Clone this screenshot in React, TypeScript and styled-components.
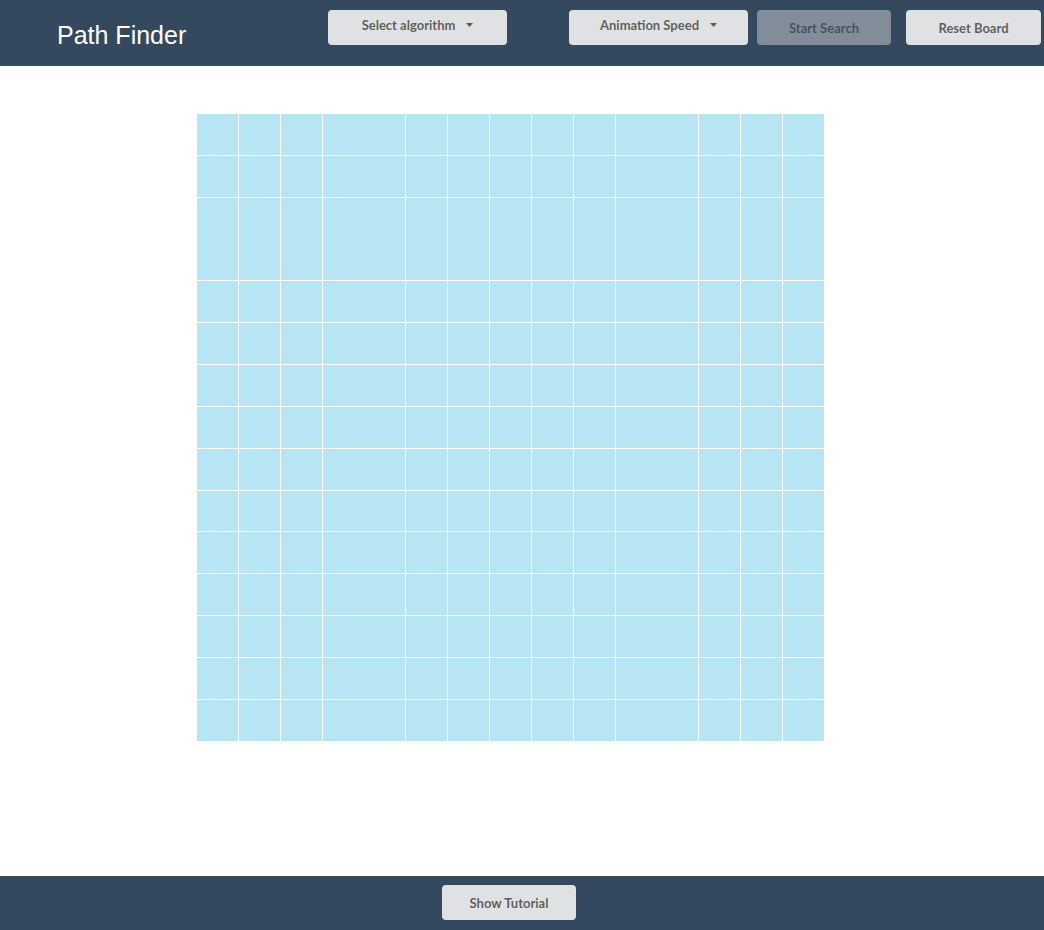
import React from 'react';
import styled, { createGlobalStyle } from 'styled-components';

// column / row sizes of the board, two wide columns and one tall row
const COLUMNS = [41, 41, 41, 82, 41, 41, 41, 41, 41, 82, 41, 41, 41];
const ROWS = [41, 41, 82, 41, 41, 41, 41, 41, 40, 41, 41, 41, 41, 41];

const GlobalStyle = createGlobalStyle`
  html, body {
    margin: 0;
    padding: 0;
    background: #ffffff;
    font-family: "Liberation Sans", Arial, sans-serif;
  }
`;

const Page = styled.div`
  display: flex;
  flex-direction: column;
  min-height: 100vh;
`;

const TopBar = styled.header`
  display: flex;
  align-items: flex-start;
  height: 66px;
  padding-left: 57px;
  background: #34495e;
  box-sizing: border-box;
`;

const Title = styled.h1`
  margin: 0;
  width: 128px;
  padding-top: 21px;
  font-family: "Liberation Sans", Arial, sans-serif;
  font-size: 25px;
  font-weight: 400;
  line-height: 29px;
  color: #ffffff;
  white-space: nowrap;
`;

const Button = styled.button<{ $width: number; $offset?: number; $disabled?: boolean }>`
  display: flex;
  align-items: center;
  justify-content: center;
  gap: 11px;
  width: ${p => p.$width}px;
  height: 35px;
  margin-top: 10px;
  margin-left: ${p => p.$offset ?? 0}px;
  padding: 1px 0 0;
  border: none;
  border-radius: 4px;
  background: #e0e1e2;
  color: rgba(0, 0, 0, 0.6);
  font-family: Lato, "Open Sans", sans-serif;
  font-size: 13px;
  font-weight: 700;
  opacity: ${p => (p.$disabled ? 0.45 : 1)};
  cursor: ${p => (p.$disabled ? 'default' : 'pointer')};
`;

const DropdownButton = styled(Button)`
  padding: 0 0 5px;
`;

const Caret = styled.svg`
  width: 7px;
  height: 4px;
  fill: rgba(0, 0, 0, 0.6);
`;

const Main = styled.main`
  flex: 1;
  padding: 48px 0 0 197px;
`;

const Board = styled.div<{ $cols: string; $rows: string }>`
  display: grid;
  grid-template-columns: ${p => p.$cols};
  grid-template-rows: ${p => p.$rows};
  gap: 1px;
  width: max-content;
  background: #ffffff;
`;

const Cell = styled.div`
  background: #b8e5f4;
`;

const BottomBar = styled.footer`
  display: flex;
  height: 54px;
  padding-left: 442px;
  background: #34495e;
  box-sizing: border-box;
`;

const FooterButton = styled(Button)`
  margin-top: 9px;
`;

const Dropdown: React.FC<{ label: string; offset: number }> = ({ label, offset }) => (
  <DropdownButton $width={179} $offset={offset}>
    <span>{label}</span>
    <Caret viewBox="0 0 7 4">
      <path d="M0 0 L7 0 L3.5 4 Z" />
    </Caret>
  </DropdownButton>
);

const App: React.FC = () => {
  const cells = ROWS.flatMap((_, r) => COLUMNS.map((_, c) => <Cell key={`${r}-${c}`} />));

  return (
    <>
      <GlobalStyle />
      <Page>
        <TopBar>
          <Title>Path Finder</Title>
          <Dropdown label="Select algorithm" offset={143} />
          <Dropdown label="Animation Speed" offset={62} />
          <Button $width={134} $offset={9} $disabled>
            Start Search
          </Button>
          <Button $width={135} $offset={15}>
            Reset Board
          </Button>
        </TopBar>
        <Main>
          <Board
            $cols={COLUMNS.map(w => `${w}px`).join(' ')}
            $rows={ROWS.map(h => `${h}px`).join(' ')}
          >
            {cells}
          </Board>
        </Main>
        <BottomBar>
          <FooterButton $width={134}>Show Tutorial</FooterButton>
        </BottomBar>
      </Page>
    </>
  );
};

export default App;
